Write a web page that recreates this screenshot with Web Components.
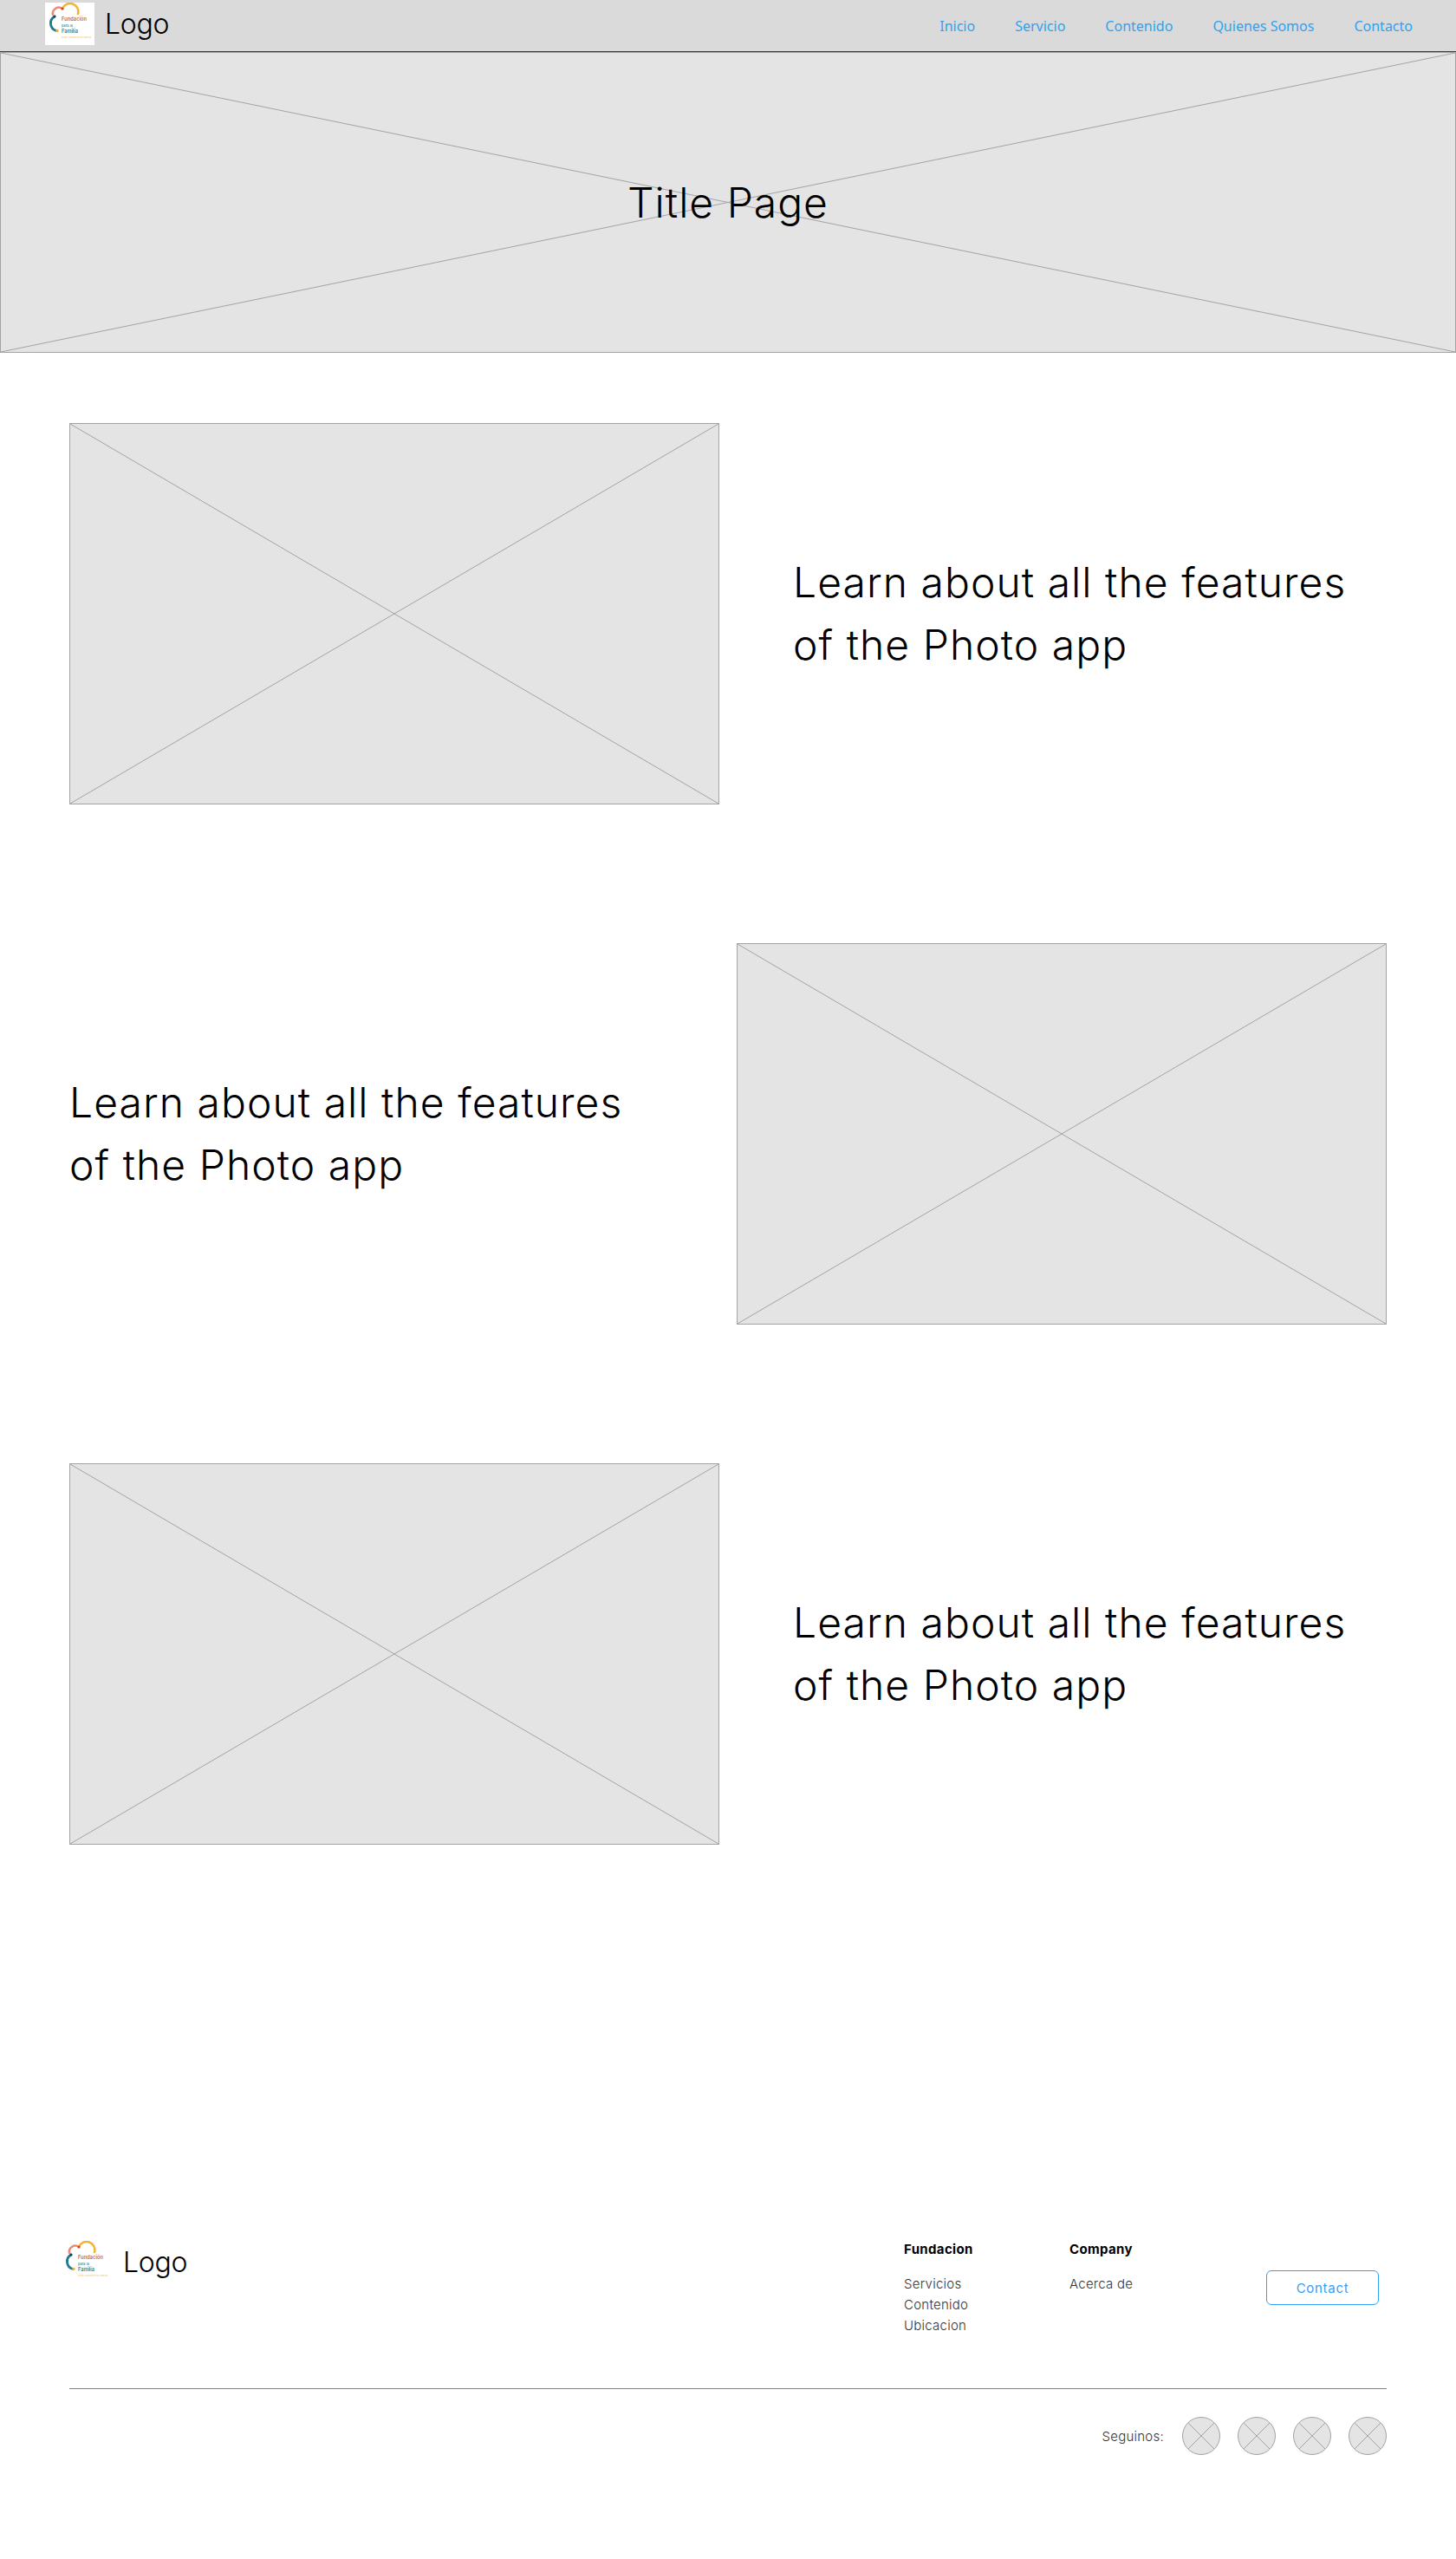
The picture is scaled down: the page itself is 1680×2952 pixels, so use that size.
<!DOCTYPE html>
<html lang="es">
<head>
    <meta charset="UTF-8">
    <title>Fundacion para la Familia</title>
    <style>
        html, body { margin: 0; background: #fff; }
        body { font-family: 'Inter', 'Liberation Sans', sans-serif; color: #000; }
    </style>
</head>
<body>
    <site-header></site-header>
    <place-holder class="hero" style="--h: 347px;"><h1 style="margin:0;font-size:48px;font-weight:350;line-height:1;letter-spacing:1px;">Title Page</h1></place-holder>

    <main style="display:flex;flex-direction:column;gap:160px;padding:81px 80px 0;">
        <feature-row>Learn about all the features of the Photo app</feature-row>
        <feature-row reverse>Learn about all the features of the Photo app</feature-row>
        <feature-row>Learn about all the features of the Photo app</feature-row>
    </main>

    <site-footer></site-footer>

    <script>
        // Logo de la fundacion, se usa en cabecera y pie
        class BrandLogo extends HTMLElement {
            constructor() {
                super();
                this.attachShadow({ mode: 'open' });
                this.shadowRoot.innerHTML = `
                    <style>
                        :host { display: flex; align-items: center; gap: var(--logo-gap, 14px); }
                        svg { width: 57px; height: 49px; display: block; background: var(--logo-bg, transparent); flex: none; }
                        span { font-size: 32px; font-weight: 300; line-height: 40px; letter-spacing: -0.3px; }
                        text { font-family: 'Inter', 'Liberation Sans', sans-serif; }
                    </style>
                    <svg viewBox="0 0 57 49" fill="none" stroke-linecap="round">
                        <path d="M20 7 A7 7 0 0 0 9 14" stroke="#f08a70" stroke-width="2.6"/>
                        <path d="M20 7 A9.5 9.5 0 0 1 38 13" stroke="#f5b335" stroke-width="2.6"/>
                        <path d="M11 16 A9 9 0 0 0 13 32.5" stroke="#1f7a8c" stroke-width="2.8"/>
                        <circle cx="20" cy="7" r="1.6" fill="#d8452e"/>
                        <circle cx="11" cy="16" r="1.5" fill="#16404d"/>
                        <circle cx="14" cy="32.5" r="1.7" fill="#f5b335"/>
                        <text x="19" y="21" font-size="5.6" font-weight="600" fill="#b9694e" textLength="29">Fundación</text>
                        <text x="19" y="28" font-size="3.8" font-weight="500" fill="#2f7f88" textLength="13">para la</text>
                        <text x="19" y="34.5" font-size="5.6" font-weight="600" fill="#2f7f88" textLength="19">Familia</text>
                        <text x="19" y="40.5" font-size="2.2" font-weight="500" fill="#e9c75e" textLength="34">Niñez Adolescencia Familia</text>
                    </svg>
                    <span>Logo</span>
                `;
            }
        }

        // Caja gris con la X del wireframe
        class PlaceHolder extends HTMLElement {
            constructor() {
                super();
                this.attachShadow({ mode: 'open' });
                this.shadowRoot.innerHTML = `
                    <style>
                        :host {
                            display: flex;
                            align-items: center;
                            justify-content: center;
                            position: relative;
                            box-sizing: border-box;
                            width: var(--w, auto);
                            height: var(--h, auto);
                            background: #e4e4e4;
                            border: 1px solid #a3a3a3;
                            border-radius: var(--r, 0);
                            overflow: hidden;
                        }
                        svg { position: absolute; inset: 0; width: 100%; height: 100%; }
                        line { stroke: #a3a3a3; stroke-width: 1; vector-effect: non-scaling-stroke; }
                        .content { position: relative; }
                    </style>
                    <svg viewBox="0 0 100 100" preserveAspectRatio="none">
                        <line x1="0" y1="0" x2="100" y2="100"/>
                        <line x1="100" y1="0" x2="0" y2="100"/>
                    </svg>
                    <div class="content"><slot></slot></div>
                `;
            }
        }

        class SiteHeader extends HTMLElement {
            constructor() {
                super();
                this.attachShadow({ mode: 'open' });
                this.shadowRoot.innerHTML = `
                    <style>
                        :host {
                            display: flex;
                            align-items: center;
                            justify-content: space-between;
                            box-sizing: border-box;
                            height: 60px;
                            padding: 0 50px 4px 52px;
                            background: #dadada;
                            border-bottom: 1px solid #3c3c3c;
                        }
                        nav { display: flex; gap: 46px; margin-top: 5px; }
                        a { color: #2ea3f2; font: 400 16px 'Noto Sans', sans-serif; text-decoration: none; }
                    </style>
                    <brand-logo style="--logo-bg:#fff;--logo-gap:12px;"></brand-logo>
                    <nav>
                        <a href="#">Inicio</a>
                        <a href="#">Servicio</a>
                        <a href="#">Contenido</a>
                        <a href="#">Quienes Somos</a>
                        <a href="#">Contacto</a>
                    </nav>
                `;
            }
        }

        class FeatureRow extends HTMLElement {
            constructor() {
                super();
                this.attachShadow({ mode: 'open' });
                this.shadowRoot.innerHTML = `
                    <style>
                        :host { display: flex; align-items: center; justify-content: space-between; height: 440px; }
                        :host([reverse]) { flex-direction: row-reverse; }
                        p { margin: 0; width: 685px; font-size: 48px; font-weight: 350; line-height: 72px; letter-spacing: 1.05px; }
                    </style>
                    <place-holder style="--w:750px;--h:440px;flex:none;"></place-holder>
                    <p><slot></slot></p>
                `;
            }
        }

        class FooterColumn extends HTMLElement {
            constructor() {
                super();
                this.attachShadow({ mode: 'open' });
                this.shadowRoot.innerHTML = `
                    <style>
                        :host { display: block; width: 191px; }
                        h4 { margin: 0 0 18px; font-size: 15px; font-weight: 700; line-height: 20px; letter-spacing: 0.35px; color: #000; }
                        ::slotted(a) { display: block; font-size: 15px; font-weight: 300; line-height: 24px; letter-spacing: 0.25px; color: #333; text-decoration: none; }
                    </style>
                    <h4></h4>
                    <slot></slot>
                `;
                this.shadowRoot.querySelector('h4').textContent = this.getAttribute('heading');
            }
        }

        class SiteFooter extends HTMLElement {
            constructor() {
                super();
                this.attachShadow({ mode: 'open' });
                this.shadowRoot.innerHTML = `
                    <style>
                        :host { display: block; padding: 457px 80px 120px; }
                        .top { display: flex; align-items: flex-start; height: 171px; box-sizing: border-box; border-bottom: 1px solid #808080; }
                        brand-logo { --logo-gap: 14px; margin: 0 0 0 -9px; }
                        .cols { display: flex; margin-left: auto; }
                        .cta {
                            box-sizing: border-box;
                            width: 130px;
                            height: 40px;
                            margin: 34px 9px 0 36px;
                            display: flex;
                            align-items: center;
                            justify-content: center;
                            border: 1px solid #2ea3f2;
                            border-radius: 6px;
                            color: #2ea3f2;
                            font-size: 15px;
                            font-weight: 400;
                            letter-spacing: 0.7px;
                        }
                        .social { display: flex; align-items: center; justify-content: flex-end; gap: 20px; padding-top: 32px; }
                        .social span { font-size: 15px; font-weight: 300; letter-spacing: 0.25px; color: #333; margin-right: 1px; }
                    </style>
                    <div class="top">
                        <brand-logo></brand-logo>
                        <div class="cols">
                            <footer-column heading="Fundacion">
                                <a href="#">Servicios</a>
                                <a href="#">Contenido</a>
                                <a href="#">Ubicacion</a>
                            </footer-column>
                            <footer-column heading="Company">
                                <a href="#">Acerca de</a>
                            </footer-column>
                        </div>
                        <div class="cta">Contact</div>
                    </div>
                    <div class="social">
                        <span>Seguinos:</span>
                        <place-holder style="--w:44px;--h:44px;--r:50%;"></place-holder>
                        <place-holder style="--w:44px;--h:44px;--r:50%;"></place-holder>
                        <place-holder style="--w:44px;--h:44px;--r:50%;"></place-holder>
                        <place-holder style="--w:44px;--h:44px;--r:50%;"></place-holder>
                    </div>
                `;
            }
        }

        customElements.define('brand-logo', BrandLogo);
        customElements.define('place-holder', PlaceHolder);
        customElements.define('site-header', SiteHeader);
        customElements.define('feature-row', FeatureRow);
        customElements.define('footer-column', FooterColumn);
        customElements.define('site-footer', SiteFooter);
    </script>
</body>
</html>
